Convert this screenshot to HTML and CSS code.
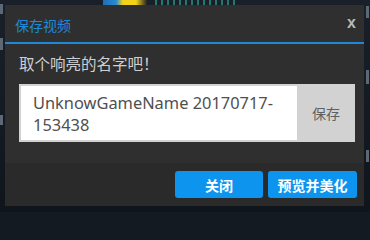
FILE: index.html
```html
<!DOCTYPE html>
<html lang="zh-CN">
<head>
<meta charset="utf-8">
<title>保存视频</title>
<link rel="stylesheet" href="styles.css">
</head>
<body>
<div class="backdrop">
  <div class="deco deco-art"></div>
  <div class="deco deco-green"></div>
  <div class="deco deco-l1"></div>
  <div class="deco deco-l2"></div>
  <div class="deco deco-l3"></div>
  <div class="deco deco-r1"></div>
  <div class="deco deco-r2"></div>
  <div class="deco deco-r3"></div>
</div>
<div class="dialog">
  <div class="dlg-header">
    <span class="dlg-title">保存视频</span>
    <span class="dlg-close">x</span>
  </div>
  <div class="dlg-body">
    <div class="dlg-label">取个响亮的名字吧！</div>
    <div class="name-group">
      <div class="name-input">UnknowGameName 20170717-153438</div>
      <div class="name-save">保存</div>
    </div>
  </div>
  <div class="dlg-footer">
    <button class="btn">关闭</button>
    <button class="btn">预览并美化</button>
  </div>
</div>
</body>
</html>
```
FILE: styles.css
```css
html, body {
  margin: 0;
  padding: 0;
}
body {
  width: 370px;
  height: 212px;
  overflow: hidden;
  position: relative;
  background: #141a22;
  font-family: "Noto Sans", "Noto Sans CJK SC", sans-serif;
}
.backdrop {
  position: absolute;
  inset: 0;
  background: linear-gradient(180deg, #1a2029 0%, #10151c 100%);
}
.deco {
  position: absolute;
}
.deco-art {
  left: 103px;
  top: 0;
  width: 44px;
  height: 6px;
  background: linear-gradient(90deg, #1d6fb8 0%, #2a8ad0 30%, #f2d21a 45%, #f2d21a 75%, #222 100%);
}
.deco-green {
  left: 155px;
  top: 0;
  width: 80px;
  height: 5px;
  background: repeating-linear-gradient(90deg, #2a9c86 0 2px, transparent 2px 6px);
  opacity: 0.7;
}
.deco-l1, .deco-l2, .deco-l3 {
  left: 0;
  width: 3px;
  background: #5d6876;
}
.deco-l1 { top: 4px; height: 10px; }
.deco-l2 { top: 38px; height: 12px; }
.deco-l3 { top: 115px; height: 10px; }
.deco-r1, .deco-r2, .deco-r3 {
  left: 366px;
  width: 3px;
  background: #5d6876;
}
.deco-r1 { top: 6px; height: 12px; }
.deco-r2 { top: 70px; height: 14px; }
.deco-r3 { top: 150px; height: 12px; }
.dialog {
  position: absolute;
  left: 5px;
  top: 5px;
  width: 359px;
  height: 201px;
  background: #2f2f2f;
  display: flex;
  flex-direction: column;
}
.dlg-header {
  height: 37px;
  border-bottom: 2px solid #1e88d6;
  display: flex;
  align-items: center;
  justify-content: space-between;
  padding: 0 8px 0 10px;
  box-sizing: content-box;
}
.dlg-title {
  font-size: 14px;
  color: #1f8ad8;
  position: relative;
  top: 1px;
}
.dlg-close {
  font-size: 16px;
  font-weight: bold;
  color: #b8b8b8;
  font-family: "Liberation Sans", sans-serif;
  position: relative;
  top: -1px;
}
.dlg-body {
  flex: 1;
  padding: 10px 9px 0 14px;
}
.dlg-label {
  font-size: 15.5px;
  line-height: 20px;
  color: #cfcfcf;
}
.name-group {
  margin-top: 10px;
  height: 58px;
  box-sizing: border-box;
  display: flex;
  border: 2px solid #d2d2d2;
  border-right: none;
  background: #ffffff;
}
.name-input {
  flex: 1;
  padding: 6px 6px 0 12px;
  font-size: 16.4px;
  line-height: 22px;
  color: #4f4f4f;
}
.name-save {
  width: 58px;
  background: #d2d2d2;
  color: #5f5f5f;
  font-size: 14px;
  display: flex;
  align-items: center;
  justify-content: center;
}
.dlg-footer {
  height: 43px;
  background: #2a2a2a;
  display: flex;
  justify-content: flex-end;
  align-items: flex-start;
  gap: 5px;
  padding: 8px 7px 0 0;
  box-sizing: border-box;
}
.btn {
  width: 88px;
  height: 27px;
  border: none;
  border-radius: 3px;
  background: #0c94ef;
  color: #ffffff;
  font-family: "Noto Sans CJK SC", sans-serif;
  font-weight: bold;
  font-size: 14px;
  padding: 0;
}
.btn + .btn {
  width: 89px;
}
```
